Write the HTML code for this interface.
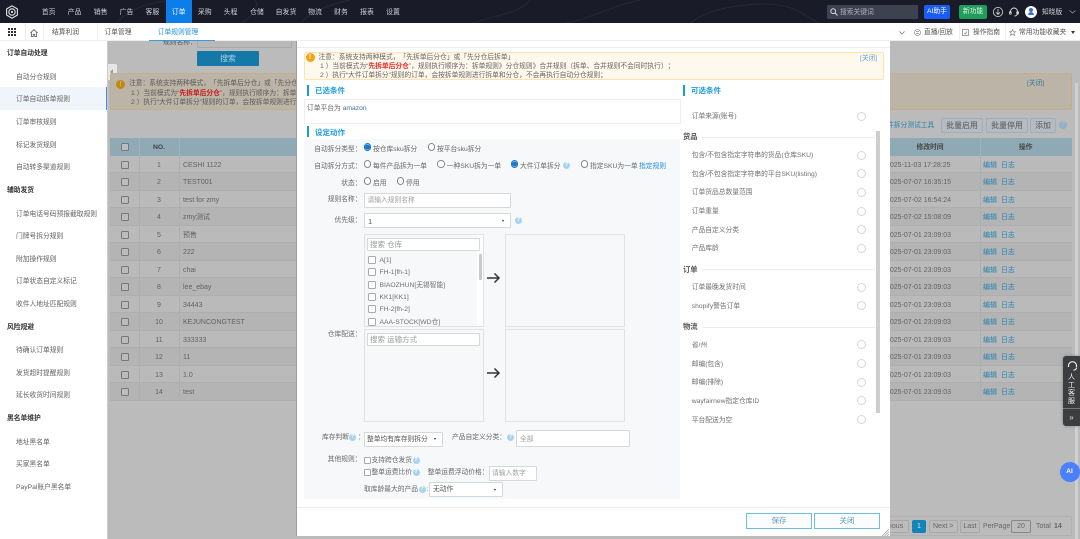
<!DOCTYPE html>
<html lang="zh"><head><meta charset="utf-8"><title>订单规则管理</title>
<style>
*{box-sizing:border-box;margin:0;padding:0}
html,body{width:1080px;height:539px;overflow:hidden;background:#fff}
body{font:6.75px/10px "Liberation Sans","Noto Sans CJK SC",sans-serif;color:#666;position:relative;text-spacing-trim:space-all}
#w{position:absolute;left:0;top:0;width:1080px;height:539px;overflow:hidden;filter:blur(.3px)}
.a,.t{position:absolute}
.t{white-space:nowrap;height:10px;line-height:11.6px}
.c{transform:translateX(-50%)}
.r{transform:translateX(-100%)}
.nav{color:#cfd0d6;top:7px;font-size:6.9px}
.s{left:16px;color:#626262;font-size:6.75px}
.h{left:7px;color:#333;font-weight:bold;font-size:6.75px}
.row{position:absolute;left:110px;width:962px;height:17.5px;border-bottom:1px solid #adaead;background:#b9bab9;font-size:7px}
.row.o{background:#b3b4b3}
.row i{position:absolute;left:29px;top:0;bottom:0;width:1px;background:#adaead}
.row b{position:absolute;left:69px;top:0;bottom:0;width:1px;background:#adaead}
.row u{position:absolute;left:870px;top:0;bottom:0;width:1px;background:#adaead}
.row em{position:absolute;left:11px;top:5px;width:8px;height:8px;border:1px solid #777;border-radius:1.5px;background:#bcbcbc}
.row span{position:absolute;top:4px;height:10px;line-height:11.6px;white-space:nowrap;color:#626262;font-style:normal}
.no{left:29px;width:40px;text-align:center}
.nm{left:73px}
.tm{left:776px}
.op{left:873px;color:#2a83b0!important}
.bb{position:absolute;top:118px;height:15px;background:#b4bcc1;border:1px solid #a2adb6;border-radius:2px;color:#555;text-align:center;line-height:13px;font-size:7.9px}
.pg{position:absolute;top:520px;height:13px;border:1px solid #a7a8a7;border-radius:2px;color:#666;text-align:center;line-height:12px;font-size:7px}
.rd{position:absolute;width:7.5px;height:7.5px;border:1px solid #888;border-radius:50%;background:#fff}
.rd.on{border-color:#1a78c8;background:radial-gradient(circle,#1a78c8 0 2.4px,#fff 2.8px)}
.q{position:absolute;width:7px;height:7px;border-radius:50%;background:#a5d4ee;color:#fff;font-size:5px;line-height:7px;text-align:center;font-weight:bold}
.lb{color:#686868;font-size:6.75px}
.ip{position:absolute;background:#fff;border:1px solid #d5d8dc;border-radius:1px}
.ph{color:#a0a0a0}
.ck{position:absolute;left:368px;width:8px;height:8px;border:1px solid #aaa;border-radius:1.5px;background:#fff}
.box{position:absolute;border:1px solid #e0e3e6;background:#f6f8fa}
.i2{color:#707070;font-size:6.75px}
.cir{position:absolute;left:857px;width:9px;height:9px;border:1px solid #d6d6d6;border-radius:50%;background:#fff}
.ln{position:absolute;left:702px;width:173px;height:1px;background:#ececec}
.sec{left:683px;color:#555;font-weight:bold;font-size:7.3px}
.arw{position:absolute;left:486px;width:15px;height:12px}
.tri{position:absolute;width:0;height:0;border-left:1.6px solid transparent;border-right:1.6px solid transparent;border-top:2px solid #333}
.hd{color:#1f9be0;font-weight:bold;font-size:7.5px}
</style></head><body><div id="w">

<!-- gray content -->
<div class="a" style="left:107px;top:41px;width:973px;height:498px;background:#babbba"></div>
<div class="a" style="left:107px;top:41px;width:1px;height:498px;background:#cbcbcb"></div>
<div class="a" style="left:1075px;top:83px;width:2.5px;height:456px;background:#cfd0cf"></div>
<div class="a" style="left:197px;top:51px;width:62px;height:15px;background:#1479a8;border-radius:1px;color:#a7d0e2;text-align:center;line-height:15px;font-size:7.9px">搜索</div>
<span class="t" style="left:163px;top:36.5px;color:#555">规则名称：</span>
<div class="a" style="left:197px;top:41px;width:95px;height:7px;background:#b8b9b8;border:1px solid #a8a9a8;border-top:0"></div>

<!-- top bar -->
<div class="a" style="left:0;top:0;width:1080px;height:23.3px;background:#191b28;overflow:hidden">
<svg width="1080" height="24" style="position:absolute;left:0;top:0" fill="none" stroke="#2b2d3b" stroke-width=".7"><path d="M115 24C130 8 150 2 175 0M300 24C310 12 330 4 350 0M470 24C490 16 520 14 530 0M560 24C590 20 610 6 640 0M690 24C700 14 720 6 760 4 790 3 800 12 820 24M240 24C250 18 260 8 255 0"/></svg>
<svg width="14" height="14" viewBox="0 0 14 14" style="position:absolute;left:5px;top:5px" fill="none"><path d="M7 .8 12.4 3.9V10.1L7 13.2 1.6 10.1V3.9Z" stroke="#e4e4e4" stroke-width="1.1"/><circle cx="7" cy="7" r="3.2" stroke="#e4e4e4" stroke-width="1.1"/><circle cx="7" cy="7" r="1.1" fill="#e4e4e4"/></svg>
</div>
<div class="a" style="left:166px;top:0;width:26px;height:23.3px;background:#0c7eea"></div>
<span class="t c nav" style="left:48.6px">首页</span><span class="t c nav" style="left:74.5px">产品</span><span class="t c nav" style="left:100.7px">销售</span><span class="t c nav" style="left:126.5px">广告</span><span class="t c nav" style="left:152.4px">客服</span><span class="t c nav" style="left:178.6px;color:#fff">订单</span><span class="t c nav" style="left:204.8px">采购</span><span class="t c nav" style="left:230.7px">头程</span><span class="t c nav" style="left:256.9px">仓储</span><span class="t c nav" style="left:286px">自发货</span><span class="t c nav" style="left:315px">物流</span><span class="t c nav" style="left:341px">财务</span><span class="t c nav" style="left:367px">报表</span><span class="t c nav" style="left:393px">设置</span>

<div class="a" style="left:827px;top:5px;width:91px;height:13.5px;background:#3c4250;border-radius:1px"></div>
<svg class="a" style="left:830px;top:8px" width="8" height="8" viewBox="0 0 8 8" fill="none" stroke="#d8d8d8"><circle cx="3.2" cy="3.2" r="2.4"/><path d="M5 5 7.5 7.5"/></svg>
<span class="t" style="left:840px;top:6.5px;color:#aeb2ba">搜索关键词</span>
<div class="a" style="left:924px;top:5px;width:26px;height:13.5px;background:#1a5cf6;border-radius:2px;color:#fff;text-align:center;line-height:13.5px">AI助手</div>
<div class="a" style="left:959px;top:5px;width:28px;height:13.5px;background:#1f9d5b;border-radius:2px;color:#e6f5ec;text-align:center;line-height:13.5px">新功能</div>
<svg class="a" style="left:992px;top:6px" width="12" height="12" viewBox="0 0 12 12" fill="none" stroke="#ddd" stroke-width=".8"><circle cx="6" cy="6" r="4.6"/><path d="M6 3v5M4 6.4 6 8.4 8 6.4"/></svg>
<svg class="a" style="left:1008px;top:6px" width="12" height="12" viewBox="0 0 12 12" fill="none" stroke="#ddd" stroke-width=".9"><path d="M2.5 7V5.5a3.5 3.5 0 0 1 7 0V7"/><path d="M9.5 7c0 2-1.5 3-3.2 3"/><rect x="1.6" y="5.6" width="1.6" height="2.6" rx=".6"/><rect x="8.8" y="5.6" width="1.6" height="2.6" rx=".6"/></svg>
<div class="a" style="left:1025px;top:6px;width:12px;height:12px;border-radius:50%;background:#fff"></div>
<div class="a" style="left:1029px;top:8px;width:4px;height:4px;border-radius:50%;background:#3a6fd8"></div>
<div class="a" style="left:1028px;top:12px;width:6px;height:3px;border-radius:3px 3px 0 0;background:#3a6fd8"></div>
<span class="t" style="left:1042px;top:6.5px;color:#d0d2d6">知晓版</span>
<svg class="a" style="left:1069px;top:10px" width="7" height="4" fill="none" stroke="#9a9ca2" stroke-width=".8"><path d="M.5.5 3.5 3 6.5.5"/></svg>

<!-- tab bar -->
<div class="a" style="left:0;top:23.3px;width:1080px;height:17.7px;background:#fff;border-bottom:1px solid #eee"></div>
<svg class="a" style="left:8px;top:28px" width="8" height="8" fill="#333"><rect width="2" height="2"/><rect x="3" width="2" height="2"/><rect x="6" width="2" height="2"/><rect y="3" width="2" height="2"/><rect x="3" y="3" width="2" height="2"/><rect x="6" y="3" width="2" height="2"/><rect y="6" width="2" height="2"/><rect x="3" y="6" width="2" height="2"/><rect x="6" y="6" width="2" height="2"/></svg>
<div class="a" style="left:25px;top:23.3px;width:1px;height:17.7px;background:#eee"></div>
<svg class="a" style="left:29.5px;top:28.5px" width="8" height="8" viewBox="0 0 8 8" fill="none" stroke="#444" stroke-width=".7"><path d="M.4 4 4 .6 7.6 4M1.4 3.4V7.5H3.2V5.2H4.8V7.5H6.6V3.4"/></svg>
<div class="a" style="left:43px;top:23.3px;width:1px;height:17.7px;background:#eee"></div>
<span class="t c" style="left:65.5px;top:27.2px;color:#555">结算利润</span>
<div class="a" style="left:96.5px;top:23.3px;width:1px;height:17.7px;background:#eee"></div>
<span class="t c" style="left:118px;top:27.2px;color:#555">订单管理</span>
<span class="t c" style="left:178px;top:27.2px;color:#1f8fe0">订单规则管理</span>
<div class="a" style="left:149px;top:40px;width:66px;height:1px;background:#3a98e6"></div>
<svg class="a" style="left:899px;top:31px" width="6" height="4" fill="none" stroke="#666" stroke-width=".7"><path d="M.5.5 3 3 5.5.5"/></svg>
<svg class="a" style="left:914px;top:29px" width="7" height="7" fill="none" stroke="#777" stroke-width=".6"><circle cx="3.5" cy="3.5" r="3"/><path d="M2 2.6H5M2 4.4H5"/></svg>
<span class="t" style="left:924px;top:27.2px;color:#555">直播/回放</span>
<div class="a" style="left:959px;top:23.3px;width:1px;height:17.7px;background:#eee"></div>
<svg class="a" style="left:961.5px;top:29px" width="7" height="7" fill="none" stroke="#777" stroke-width=".7"><rect x=".5" y=".5" width="6" height="6"/><path d="M2 4 3.2 5 5 2.4"/></svg>
<span class="t" style="left:973px;top:27.2px;color:#555">操作指南</span>
<div class="a" style="left:1005px;top:23.3px;width:1px;height:17.7px;background:#eee"></div>
<svg class="a" style="left:1009px;top:29px" width="7" height="7" viewBox="0 0 8 8" fill="none" stroke="#777" stroke-width=".7"><path d="M4 .5 5 3H7.5L5.5 4.7 6.3 7.4 4 5.9 1.7 7.4 2.5 4.7 .5 3H3Z"/></svg>
<span class="t" style="left:1019px;top:27.2px;color:#555">常用功能收藏夹</span>
<div class="a" style="left:1071px;top:31px;width:0;height:0;border-left:2.5px solid transparent;border-right:2.5px solid transparent;border-top:3px solid #333"></div>

<!-- sidebar -->
<div class="a" style="left:0;top:41px;width:107px;height:498px;background:#fff"></div>
<div class="a" style="left:0;top:87.3px;width:107px;height:22.7px;background:#f0f4fb;border-right:1.2px solid #4a86e8"></div>
<span class="t h" style="top:48.3px">订单自动处理</span>
<span class="t s" style="top:71.7px">自动分仓规则</span><span class="t s" style="top:94.3px">订单自动拆单规则</span><span class="t s" style="top:116.7px">订单审核规则</span><span class="t s" style="top:139.7px">标记发货规则</span><span class="t s" style="top:162px">自动转多渠道规则</span>
<span class="t h" style="top:185px">辅助发货</span>
<span class="t s" style="top:208.5px">订单电话号码预报截取规则</span><span class="t s" style="top:231px">门牌号拆分规则</span><span class="t s" style="top:253.5px">附加操作规则</span><span class="t s" style="top:276px">订单状态自定义标记</span><span class="t s" style="top:299px">收件人地址匹配规则</span>
<span class="t h" style="top:322px">风险规避</span>
<span class="t s" style="top:345px">待确认订单规则</span><span class="t s" style="top:367.7px">发货超时提醒规则</span><span class="t s" style="top:390px">延长收货时间规则</span>
<span class="t h" style="top:413px">黑名单维护</span>
<span class="t s" style="top:436.6px">地址黑名单</span><span class="t s" style="top:459px">买家黑名单</span><span class="t s" style="top:481.7px">PayPal账户黑名单</span>

<div class="a" style="left:108px;top:64px;width:8.5px;height:16px;background:#e6e6e6;border-radius:0 2px 2px 0"></div>
<div class="a" style="left:110px;top:69px;width:0;height:0;border-top:3px solid transparent;border-bottom:3px solid transparent;border-right:3.5px solid #9c9c9c"></div>
<div class="a" style="left:110px;top:73px;width:962px;height:36.5px;background:#bbb4a7;border:1px solid #c4ae84;border-radius:2px"></div>
<div class="a" style="left:116px;top:79.5px;width:9px;height:9px;border-radius:50%;background:#c48912;color:#bbb4a7;text-align:center;font-size:7px;line-height:9px;font-weight:bold">!</div>
<span class="t" style="left:129px;top:78.3px;color:#5c5c5c">注意：系统支持两种模式，「先拆单后分仓」或「先分仓后拆单」</span>
<span class="t" style="left:131px;top:87.8px;color:#5c5c5c">1 ）当前模式为“<span style="color:#c8191d;font-weight:bold">先拆单后分仓</span>”，规则执行顺序为：拆单规则》分仓规则》合并规则（拆单、合并规则不会同时执行）；</span>
<span class="t" style="left:131px;top:97px;color:#5c5c5c">2 ）执行“大件订单拆分”规则的订单，会按拆单规则进行拆单和分仓，不会再执行自动分仓规则；</span>
<span class="t" style="left:1027px;top:78px;color:#3d7c98">[关闭]</span>

<span class="t" style="left:887px;top:120px;color:#2a83b0">件拆分测试工具</span>
<div class="bb" style="left:941px;width:42px">批量启用</div><div class="bb" style="left:986px;width:42px">批量停用</div><div class="bb" style="left:1030px;width:26px">添加</div>
<div class="a" style="left:1059px;top:121px;width:8px;height:8px;border-radius:50%;background:#8fb1c6;color:#bbb;font-size:6px;line-height:8px;text-align:center;font-weight:bold">?</div>

<!-- table -->
<div class="a" style="left:110px;top:138px;width:962px;height:17.5px;background:#8faab4"></div>
<div class="a" style="left:139px;top:138px;width:1px;height:17.5px;background:#9cb4bd"></div>
<div class="a" style="left:179px;top:138px;width:1px;height:17.5px;background:#9cb4bd"></div>
<div class="a" style="left:980px;top:138px;width:1px;height:17.5px;background:#9cb4bd"></div>
<div class="a" style="left:121px;top:142.5px;width:8px;height:8px;border:1px solid #777;border-radius:1.5px;background:#bcbcbc"></div>
<span class="t c" style="left:159px;top:141.5px;color:#444;font-weight:bold">NO.</span>
<span class="t c" style="left:930px;top:141.5px;color:#444;font-weight:bold">修改时间</span>
<span class="t c" style="left:1025.7px;top:141.5px;color:#444;font-weight:bold">操作</span>

<div class="row" style="top:155.5px"><i></i><b></b><u></u><em></em><span class="no">1</span><span class="nm">CESHI 1122</span><span class="tm">2025-11-03 17:28:25</span><span class="op">编辑&nbsp;&nbsp;日志</span></div>
<div class="row o" style="top:173px"><i></i><b></b><u></u><em></em><span class="no">2</span><span class="nm">TEST001</span><span class="tm">2025-07-07 16:35:15</span><span class="op">编辑&nbsp;&nbsp;日志</span></div>
<div class="row" style="top:190.5px"><i></i><b></b><u></u><em></em><span class="no">3</span><span class="nm">test for zmy</span><span class="tm">2025-07-02 16:54:24</span><span class="op">编辑&nbsp;&nbsp;日志</span></div>
<div class="row o" style="top:208px"><i></i><b></b><u></u><em></em><span class="no">4</span><span class="nm">zmy测试</span><span class="tm">2025-07-02 15:08:09</span><span class="op">编辑&nbsp;&nbsp;日志</span></div>
<div class="row" style="top:225.5px"><i></i><b></b><u></u><em></em><span class="no">5</span><span class="nm">预售</span><span class="tm">2025-07-01 23:09:03</span><span class="op">编辑&nbsp;&nbsp;日志</span></div>
<div class="row o" style="top:243px"><i></i><b></b><u></u><em></em><span class="no">6</span><span class="nm">222</span><span class="tm">2025-07-01 23:09:03</span><span class="op">编辑&nbsp;&nbsp;日志</span></div>
<div class="row" style="top:260.5px"><i></i><b></b><u></u><em></em><span class="no">7</span><span class="nm">chai</span><span class="tm">2025-07-01 23:09:03</span><span class="op">编辑&nbsp;&nbsp;日志</span></div>
<div class="row o" style="top:278px"><i></i><b></b><u></u><em></em><span class="no">8</span><span class="nm">lee_ebay</span><span class="tm">2025-07-01 23:09:03</span><span class="op">编辑&nbsp;&nbsp;日志</span></div>
<div class="row" style="top:295.5px"><i></i><b></b><u></u><em></em><span class="no">9</span><span class="nm">34443</span><span class="tm">2025-07-01 23:09:03</span><span class="op">编辑&nbsp;&nbsp;日志</span></div>
<div class="row o" style="top:313px"><i></i><b></b><u></u><em></em><span class="no">10</span><span class="nm">KEJUNCONGTEST</span><span class="tm">2025-07-01 23:09:03</span><span class="op">编辑&nbsp;&nbsp;日志</span></div>
<div class="row" style="top:330.5px"><i></i><b></b><u></u><em></em><span class="no">11</span><span class="nm">333333</span><span class="tm">2025-07-01 23:09:03</span><span class="op">编辑&nbsp;&nbsp;日志</span></div>
<div class="row o" style="top:348px"><i></i><b></b><u></u><em></em><span class="no">12</span><span class="nm">11</span><span class="tm">2025-07-01 23:09:03</span><span class="op">编辑&nbsp;&nbsp;日志</span></div>
<div class="row" style="top:365.5px"><i></i><b></b><u></u><em></em><span class="no">13</span><span class="nm">1.0</span><span class="tm">2025-07-01 23:09:03</span><span class="op">编辑&nbsp;&nbsp;日志</span></div>
<div class="row o" style="top:383px"><i></i><b></b><u></u><em></em><span class="no">14</span><span class="nm">test</span><span class="tm">2025-07-01 23:09:03</span><span class="op">编辑&nbsp;&nbsp;日志</span></div>

<!-- pagination -->
<div class="a" style="left:880px;top:516px;width:192px;height:19.5px;border:1px solid #b0b1b0;border-radius:2px"></div>
<div class="pg" style="left:870px;width:39px">Previous</div>
<div class="pg" style="left:912px;width:14px;background:#1484b8;border-color:#1484b8;color:#cfe6f0">1</div>
<div class="pg" style="left:928.7px;width:29px">Next &gt;</div>
<div class="pg" style="left:960px;width:20px">Last</div>
<span class="t" style="left:983px;top:521px;font-size:7px">PerPage</span>
<div class="pg" style="left:1011px;width:20px;border-color:#888">20</div>
<span class="t" style="left:1036px;top:521px;font-size:7px">Total</span>
<span class="t" style="left:1054px;top:521px;font-weight:bold;font-size:7px">14</span>

<!-- floating widgets -->
<div class="a" style="left:1063px;top:356px;width:17px;height:70px;background:#3c3d3f;border-radius:3px 0 0 3px;box-shadow:0 0 3px rgba(0,0,0,.3)"></div>
<svg class="a" style="left:1066.5px;top:361px" width="11" height="10" viewBox="0 0 11 10" fill="none" stroke="#eee" stroke-width="1.2"><path d="M1.5 6V4.7a4 4 0 0 1 8 0V6"/><path d="M9.5 6.5c0 1.7-1.5 2.6-3 2.6"/></svg>
<span class="t c" style="left:1071.5px;top:372px;color:#f0f0f0;font-size:7px">人</span>
<span class="t c" style="left:1071.5px;top:380px;color:#f0f0f0;font-size:7px">工</span>
<span class="t c" style="left:1071.5px;top:388px;color:#f0f0f0;font-size:7px">客</span>
<span class="t c" style="left:1071.5px;top:396px;color:#f0f0f0;font-size:7px">服</span>
<div class="a" style="left:1063px;top:408px;width:17px;height:1px;background:#777"></div>
<span class="t c" style="left:1071.5px;top:411.5px;color:#ddd;font-size:8px">»</span>
<div class="a" style="left:1059.5px;top:462px;width:20px;height:20px;border-radius:50%;background:#4a80fb;color:#fff;font-weight:bold;text-align:center;line-height:20px;font-size:6.5px">AI</div>

<!-- modal -->
<div class="a" style="left:296px;top:41px;width:594px;height:495px;background:#fff;border-left:1px solid #9f9f9f"></div>
<div class="a" style="left:297px;top:47px;width:593px;height:1px;background:#eee"></div>
<div class="a" style="left:304px;top:51.5px;width:579.5px;height:28px;background:#fff8ec;border:1px solid #fde3b0;border-radius:2px"></div>
<div class="a" style="left:305.5px;top:53px;width:9px;height:9px;border-radius:50%;background:#f5a312;color:#fff;text-align:center;font-size:7px;line-height:9px;font-weight:bold">!</div>
<span class="t" style="left:318.5px;top:51.8px;color:#666">注意：系统支持两种模式，「先拆单后分仓」或「先分仓后拆单」</span>
<span class="t" style="left:320px;top:61.2px;color:#666">1 ）当前模式为“<span style="color:#f02a2a;font-weight:bold">先拆单后分仓</span>”，规则执行顺序为：拆单规则》分仓规则》合并规则（拆单、合并规则不会同时执行）；</span>
<span class="t" style="left:320px;top:70.2px;color:#666">2 ）执行“大件订单拆分”规则的订单，会按拆单规则进行拆单和分仓，不会再执行自动分仓规则；</span>
<span class="t" style="left:860px;top:53px;color:#5ca6d8">[关闭]</span>

<div class="a" style="left:307px;top:85px;width:2px;height:11px;background:#1a9ae0"></div>
<span class="t hd" style="left:315px;top:85.2px">已选条件</span>
<div class="a" style="left:304px;top:99px;width:377px;height:24.5px;border:1px solid #eee;background:#fff"></div>
<span class="t" style="left:307px;top:103px;color:#666">订单平台为 <span style="color:#3a6fa8">amazon</span></span>
<div class="a" style="left:307px;top:126px;width:2px;height:11px;background:#1a9ae0"></div>
<span class="t hd" style="left:315px;top:126.5px">设定动作</span>
<div class="a" style="left:304px;top:139px;width:376px;height:360px;background:#f6f8fa"></div>

<span class="t lb r" style="left:361.5px;top:143.5px">自动拆分类型：</span>
<div class="rd on" style="left:363.5px;top:143.2px"></div><span class="t lb" style="left:373px;top:143.5px">按仓库sku拆分</span>
<div class="rd" style="left:427.5px;top:143.2px"></div><span class="t lb" style="left:437px;top:143.5px">按平台sku拆分</span>

<span class="t lb r" style="left:361.5px;top:160.5px">自动拆分方式：</span>
<div class="rd" style="left:363.5px;top:160.2px"></div><span class="t lb" style="left:373px;top:160.5px">每件产品拆为一单</span>
<div class="rd" style="left:437.3px;top:160.2px"></div><span class="t lb" style="left:446.7px;top:160.5px">一种SKU拆为一单</span>
<div class="rd on" style="left:510.5px;top:160.2px"></div><span class="t lb" style="left:520px;top:160.5px">大件订单拆分</span>
<div class="q" style="left:563.2px;top:162px">?</div>
<div class="rd" style="left:580.5px;top:160.2px"></div><span class="t lb" style="left:590px;top:160.5px">指定SKU为一单</span>
<span class="t" style="left:639px;top:160.5px;color:#1f8fe0">指定规则</span>

<span class="t lb r" style="left:361.5px;top:177.5px">状态：</span>
<div class="rd" style="left:363.5px;top:177.2px"></div><span class="t lb" style="left:373px;top:177.5px">启用</span>
<div class="rd" style="left:396.5px;top:177.2px"></div><span class="t lb" style="left:406px;top:177.5px">停用</span>

<span class="t lb r" style="left:361.5px;top:194px">规则名称：</span>
<div class="ip" style="left:364px;top:193px;width:147px;height:14.5px"></div>
<span class="t ph" style="left:367.5px;top:195px">请输入规则名称</span>

<span class="t lb r" style="left:361.5px;top:214.5px">优先级：</span>
<div class="ip" style="left:364px;top:213px;width:147px;height:15px;background:#fff"></div>
<span class="t" style="left:368px;top:215.5px;color:#555;font-size:7.5px">1</span>
<div class="tri" style="left:501.5px;top:220px"></div>
<div class="q" style="left:515px;top:217px">?</div>

<div class="box" style="left:364px;top:234px;width:120px;height:93px"></div>
<div class="a" style="left:477px;top:235px;width:6px;height:91px;background:#fff"></div>
<div class="a" style="left:478.5px;top:254px;width:3px;height:26px;background:#c9c9c9;border-radius:1px"></div>
<div class="ip" style="left:367px;top:237.5px;width:113px;height:13px"></div>
<span class="t" style="left:370px;top:238.5px;color:#999;font-size:7.5px">搜索 仓库</span>
<div class="ck" style="top:256px"></div><span class="t i2" style="left:379.5px;top:254.7px">A[1]</span>
<div class="ck" style="top:268px"></div><span class="t i2" style="left:379.5px;top:267px">FH-1[fh-1]</span>
<div class="ck" style="top:280.5px"></div><span class="t i2" style="left:379.5px;top:279.5px">BIAOZHUN[无锡智能]</span>
<div class="ck" style="top:293px"></div><span class="t i2" style="left:379.5px;top:292px">KK1[KK1]</span>
<div class="ck" style="top:305.3px"></div><span class="t i2" style="left:379.5px;top:304.3px">FH-2[fh-2]</span>
<div class="ck" style="top:317.7px"></div><span class="t i2" style="left:379.5px;top:316.7px">AAA-STOCK[WD仓]</span>
<div class="box" style="left:505px;top:234px;width:120px;height:93px"></div>
<svg class="arw" style="top:271.5px" viewBox="0 0 15 12" fill="none" stroke="#333" stroke-width="1.5"><path d="M1 6H13M8.5 1.5 13 6 8.5 10.5"/></svg>

<span class="t lb r" style="left:361.5px;top:329px">仓库配送：</span>
<div class="box" style="left:364px;top:329.3px;width:120px;height:93px"></div>
<div class="ip" style="left:367px;top:333px;width:113px;height:13px"></div>
<span class="t" style="left:370px;top:334px;color:#999;font-size:7.5px">搜索 运输方式</span>
<div class="box" style="left:505px;top:329.3px;width:120px;height:93px"></div>
<svg class="arw" style="top:367px" viewBox="0 0 15 12" fill="none" stroke="#333" stroke-width="1.5"><path d="M1 6H13M8.5 1.5 13 6 8.5 10.5"/></svg>

<span class="t lb" style="left:322px;top:432px">库存判断</span>
<div class="q" style="left:349px;top:433.5px">?</div><span class="t lb" style="left:358px;top:432px">：</span>
<div class="ip" style="left:364px;top:431.7px;width:79px;height:15px"></div>
<span class="t" style="left:367px;top:434px;color:#555">整单均有库存则拆分</span>
<div class="tri" style="left:433.5px;top:438px"></div>
<span class="t lb" style="left:452px;top:432px">产品自定义分类：</span>
<div class="q" style="left:507px;top:434px">?</div>
<div class="ip" style="left:516px;top:430.3px;width:113.5px;height:17px"></div>
<span class="t ph" style="left:520px;top:434px">全部</span>

<span class="t lb r" style="left:361.5px;top:454px">其他规则：</span>
<div class="ck" style="left:364px;top:456.5px;width:7px;height:7px;border-radius:1px"></div>
<span class="t lb" style="left:371.5px;top:454.7px">支持跨仓发货</span>
<div class="q" style="left:412.5px;top:456.5px">?</div>
<div class="ck" style="left:364px;top:469px;width:7px;height:7px;border-radius:1px"></div>
<span class="t lb" style="left:371.5px;top:467px">整单运费比价</span>
<div class="q" style="left:412.5px;top:469px">?</div>
<span class="t lb" style="left:427.7px;top:467px">整单运费浮动价格：</span>
<div class="ip" style="left:488.7px;top:466px;width:48px;height:14.5px"></div>
<span class="t ph" style="left:492px;top:468px">请输入数字</span>
<span class="t lb" style="left:364px;top:484px">取库龄最大的产品</span>
<div class="q" style="left:418.5px;top:486px">?</div><span class="t lb" style="left:426.5px;top:484px">:</span>
<div class="ip" style="left:429.3px;top:482px;width:73.5px;height:14.7px"></div>
<span class="t" style="left:433px;top:484px;color:#555">无动作</span>
<div class="tri" style="left:494px;top:488.5px"></div>

<!-- right panel -->
<div class="a" style="left:683px;top:85px;width:2px;height:11px;background:#1a9ae0"></div>
<span class="t hd" style="left:691px;top:85.2px">可选条件</span>
<span class="t i2" style="left:691.7px;top:111px">订单来源(账号)</span><div class="cir" style="top:111.5px"></div>
<span class="t sec" style="top:131.2px">货品</span><div class="ln" style="top:136.5px"></div>
<span class="t i2" style="left:691.7px;top:150px">包含/不包含指定字符串的货品(仓库SKU)</span><div class="cir" style="top:150.5px"></div>
<span class="t i2" style="left:691.7px;top:168.7px">包含/不包含指定字符串的平台SKU(listing)</span><div class="cir" style="top:169px"></div>
<span class="t i2" style="left:691.7px;top:187px">订单货品总数量范围</span><div class="cir" style="top:187.5px"></div>
<span class="t i2" style="left:691.7px;top:206px">订单重量</span><div class="cir" style="top:206.5px"></div>
<span class="t i2" style="left:691.7px;top:224.7px">产品自定义分类</span><div class="cir" style="top:225px"></div>
<span class="t i2" style="left:691.7px;top:243px">产品库龄</span><div class="cir" style="top:243.5px"></div>
<span class="t sec" style="top:263.5px">订单</span><div class="ln" style="top:269px"></div>
<span class="t i2" style="left:691.7px;top:282px">订单最晚发货时间</span><div class="cir" style="top:282.5px"></div>
<span class="t i2" style="left:691.7px;top:301px">shopify警告订单</span><div class="cir" style="top:301.2px"></div>
<span class="t sec" style="top:321.2px">物流</span><div class="ln" style="top:326.5px"></div>
<span class="t i2" style="left:691.7px;top:340px">省/州</span><div class="cir" style="top:340.2px"></div>
<span class="t i2" style="left:691.7px;top:358.5px">邮编(包含)</span><div class="cir" style="top:359px"></div>
<span class="t i2" style="left:691.7px;top:377px">邮编(排除)</span><div class="cir" style="top:377.5px"></div>
<span class="t i2" style="left:691.7px;top:396px">wayfairnew指定仓库ID</span><div class="cir" style="top:396.2px"></div>
<span class="t i2" style="left:691.7px;top:414.5px">平台配送为空</span><div class="cir" style="top:415px"></div>
<div class="a" style="left:876px;top:131px;width:3.5px;height:282px;background:#cdcdcd"></div>

<!-- footer -->
<div class="a" style="left:297px;top:506.5px;width:593px;height:1px;background:#eee"></div>
<div class="a" style="left:746px;top:512.7px;width:66px;height:16.5px;border:1px solid #6cbde8;background:#fafcfd;color:#5c9cc4;text-align:center;line-height:14.5px;font-size:7.5px">保存</div>
<div class="a" style="left:814px;top:512.7px;width:66px;height:16.5px;border:1px solid #6cbde8;background:#fafcfd;color:#5c9cc4;text-align:center;line-height:14.5px;font-size:7.5px">关闭</div>
<svg class="a" style="left:882px;top:529px" width="7" height="7" stroke="#888" stroke-width=".6"><path d="M0 7 7 0M2.5 7 7 2.5M5 7 7 5"/></svg>

</div></body></html>
